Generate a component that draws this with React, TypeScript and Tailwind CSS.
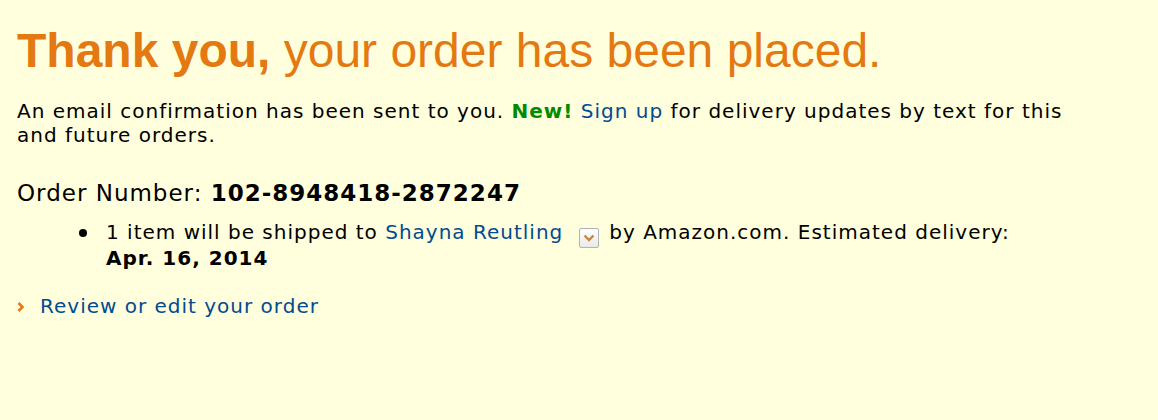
import React from 'react';

const body = { fontFamily: '"DejaVu Sans", Verdana, sans-serif' };

const App: React.FC = () => {
  return (
    <div className="min-h-[420px] w-full bg-[#ffffdd] px-[17px] pt-[21px] text-black" style={body}>
      <h1
        className="text-[48px] leading-[60px] text-[#e47911]"
        style={{ fontFamily: '"Liberation Sans", Arial, sans-serif' }}
      >
        <span className="font-bold">Thank you,</span> your order has been placed.
      </h1>

      <p className="mt-[18px] w-[1080px] text-[20px] leading-[24px] tracking-[1px]">
        An email confirmation has been sent to you.{' '}
        <span className="font-bold text-[#008a00]">New!</span>{' '}
        <a href="#" className="text-[#004b91]">Sign up</a> for delivery updates by text for this
        <br />
        and future orders.
      </p>

      <div className="mt-[32px] text-[23px] leading-[28px] tracking-[1px]">
        Order Number: <span className="font-bold">102-8948418-2872247</span>
      </div>

      <div className="mt-[12px] flex text-[20px] leading-[26px] tracking-[1px]">
        <div className="flex w-[89px] shrink-0 justify-end pr-[19px] pt-[10px]">
          <span className="h-[8px] w-[8px] rounded-full bg-black" />
        </div>
        <div>
          1 item will be shipped to{' '}
          <a href="#" className="text-[#004b91]">Shayna Reutling</a>
          <span className="-my-[4px] ml-[16px] mr-[10px] inline-flex h-[20px] w-[20px] items-center justify-center rounded-[2px] border border-[#b3b3b3] bg-gradient-to-b from-[#ffffff] to-[#e9e9e9] align-[-3px]">
            <svg width="12" height="8" viewBox="0 0 12 8">
              <path d="M1.5 1.5 L6 6 L10.5 1.5" fill="none" stroke="#c9873a" strokeWidth="2.4" />
            </svg>
          </span>
          by Amazon.com. Estimated delivery:
          <br />
          <span className="font-bold">Apr. 16, 2014</span>
        </div>
      </div>

      <div className="mt-[23px] flex items-center text-[20px] leading-[24px] tracking-[1px]">
        <svg width="8" height="12" viewBox="0 0 8 12" className="mr-[15px] mt-[1px]">
          <path d="M1.5 2 L5.5 6 L1.5 10" fill="none" stroke="#e47911" strokeWidth="2.6" />
        </svg>
        <a href="#" className="text-[#004b91]">Review or edit your order</a>
      </div>
    </div>
  );
};

export default App;
